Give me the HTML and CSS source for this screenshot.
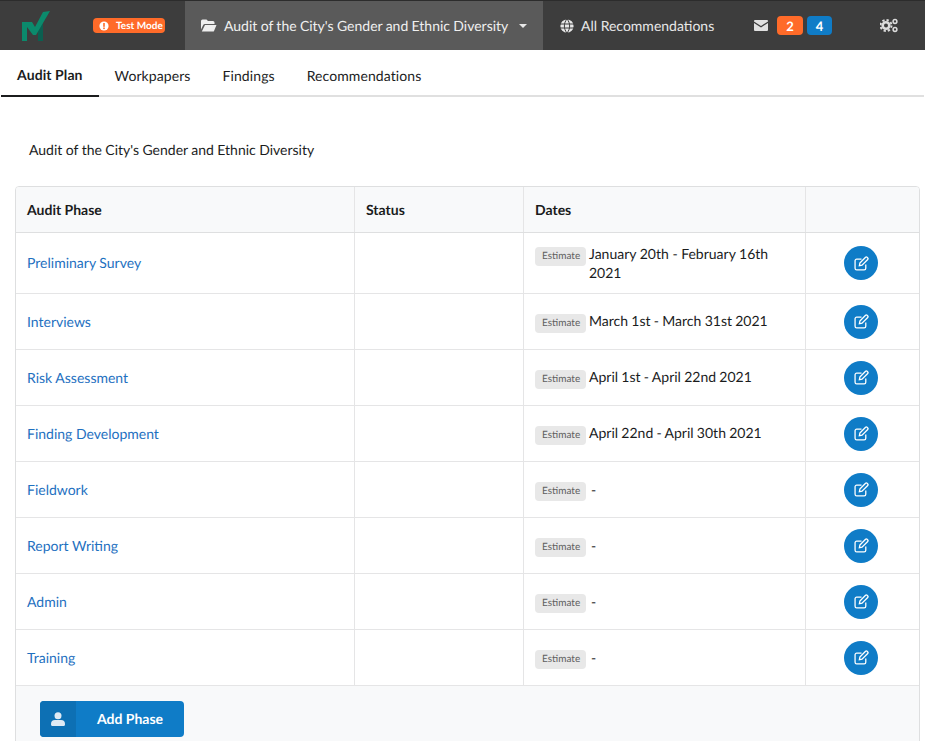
FILE: index.html
```html
<!DOCTYPE html>
<html lang="en">
<head>
<meta charset="utf-8">
<title>Audit Plan</title>
<link rel="stylesheet" href="styles.css">
</head>
<body>
<header class="topbar">
  <div class="brand">
    <svg class="logo" width="28" height="30" viewBox="0 0 28 30"><path fill="#0b5f50" d="M16 19l5-7v18h-5z"/><path fill="#0b8a6c" d="M0 11h10l3 5L21 1l7-1-14 24h-3l-6-8v14H0z"/></svg>
  </div>
  <div class="test-mode"><svg width="10" height="10" viewBox="0 0 10 10"><circle cx="5" cy="5" r="4.6" fill="#fff"/><rect x="4.2" y="2" width="1.6" height="3.8" fill="#ff6b29"/><rect x="4.2" y="6.5" width="1.6" height="1.6" fill="#ff6b29"/></svg><span>Test Mode</span></div>
  <div class="project">
    <svg width="16" height="13" viewBox="0 0 16 13"><path fill="#eee" d="M0 2a1.500 1.500 0 0 1 1.500-1.500h4L7 2h5a1.500 1.500 0 0 1 1.500 1.500V5H4a2 2 0 0 0-1.800 1.100L0 10.500z"/><path fill="#eee" d="M4 6h11.500L13 12a1 1 0 0 1-1 .6H0.800z"/></svg>
    <span class="project-name">Audit of the City's Gender and Ethnic Diversity</span>
    <span class="caret"></span>
  </div>
  <div class="all-rec">
    <svg width="14" height="14" viewBox="0 0 14 14"><circle cx="7" cy="7" r="6.600" fill="#e6e6e6"/><path stroke="#3d3d3d" fill="none" stroke-width="1" d="M0 5h14M0 9h14M7 0C3.500 4 3.500 10 7 14M7 0c3.500 4 3.500 10 0 14"/></svg>
    <span>All Recommendations</span>
  </div>
  <div class="notices">
    <svg width="14" height="11" viewBox="0 0 14 11"><path fill="#e0e0e0" d="M1 0h12a1 1 0 0 1 1 1v.6L7 6 0 1.600V1a1 1 0 0 1 1-1z"/><path fill="#e0e0e0" d="M0 3l7 4.400L14 3v7a1 1 0 0 1-1 1H1a1 1 0 0 1-1-1z"/></svg>
    <span class="count orange">2</span>
    <span class="count blue">4</span>
  </div>
  <div class="gears">
    <svg width="18" height="15" viewBox="0 0 18 15"><g fill="none" stroke="#dcdcdc"><circle cx="6" cy="7.500" r="3.300" stroke-width="2.600"/><circle cx="6" cy="7.500" r="5.500" stroke-width="2" stroke-dasharray="2.300 2"/><circle cx="15" cy="3.500" r="1.900" stroke-width="1.500"/><circle cx="15" cy="11.500" r="1.900" stroke-width="1.500"/></g></svg>
  </div>
</header>
<nav class="tabs">
  <a class="tab active">Audit Plan</a>
  <a class="tab">Workpapers</a>
  <a class="tab">Findings</a>
  <a class="tab">Recommendations</a>
</nav>
<main class="content">
  <p class="audit-title">Audit of the City's Gender and Ethnic Diversity</p>
  <div class="table-card">
    <div class="row head">
      <div class="cell">Audit Phase</div><div class="cell">Status</div><div class="cell">Dates</div><div class="cell"></div>
    </div>
    <div class="row tall">
      <div class="cell"><a class="phase">Preliminary Survey</a></div><div class="cell"></div>
      <div class="cell dates"><span class="label">Estimate</span><span>January 20th - February 16th 2021</span></div>
      <div class="cell action"><button class="edit"><svg width="15" height="15" viewBox="0 0 14 14"><use href="#pen"/></svg></button></div>
    </div>
    <div class="row">
      <div class="cell"><a class="phase">Interviews</a></div><div class="cell"></div>
      <div class="cell dates"><span class="label">Estimate</span><span class="range">March 1st - March 31st 2021</span></div>
      <div class="cell action"><button class="edit"><svg width="15" height="15" viewBox="0 0 14 14"><use href="#pen"/></svg></button></div>
    </div>
    <div class="row">
      <div class="cell"><a class="phase">Risk Assessment</a></div><div class="cell"></div>
      <div class="cell dates"><span class="label">Estimate</span><span class="range">April 1st - April 22nd 2021</span></div>
      <div class="cell action"><button class="edit"><svg width="15" height="15" viewBox="0 0 14 14"><use href="#pen"/></svg></button></div>
    </div>
    <div class="row">
      <div class="cell"><a class="phase">Finding Development</a></div><div class="cell"></div>
      <div class="cell dates"><span class="label">Estimate</span><span class="range">April 22nd - April 30th 2021</span></div>
      <div class="cell action"><button class="edit"><svg width="15" height="15" viewBox="0 0 14 14"><use href="#pen"/></svg></button></div>
    </div>
    <div class="row">
      <div class="cell"><a class="phase">Fieldwork</a></div><div class="cell"></div>
      <div class="cell dates"><span class="label">Estimate</span><span class="dash">-</span></div>
      <div class="cell action"><button class="edit"><svg width="15" height="15" viewBox="0 0 14 14"><use href="#pen"/></svg></button></div>
    </div>
    <div class="row">
      <div class="cell"><a class="phase">Report Writing</a></div><div class="cell"></div>
      <div class="cell dates"><span class="label">Estimate</span><span class="dash">-</span></div>
      <div class="cell action"><button class="edit"><svg width="15" height="15" viewBox="0 0 14 14"><use href="#pen"/></svg></button></div>
    </div>
    <div class="row">
      <div class="cell"><a class="phase">Admin</a></div><div class="cell"></div>
      <div class="cell dates"><span class="label">Estimate</span><span class="dash">-</span></div>
      <div class="cell action"><button class="edit"><svg width="15" height="15" viewBox="0 0 14 14"><use href="#pen"/></svg></button></div>
    </div>
    <div class="row">
      <div class="cell"><a class="phase">Training</a></div><div class="cell"></div>
      <div class="cell dates"><span class="label">Estimate</span><span class="dash">-</span></div>
      <div class="cell action"><button class="edit"><svg width="15" height="15" viewBox="0 0 14 14"><use href="#pen"/></svg></button></div>
    </div>
    <div class="table-foot">
      <button class="add"><span class="add-icon"><svg width="14" height="14" viewBox="0 0 14 14"><circle cx="7" cy="3.800" r="3.500" fill="#dfeaf4"/><path fill="#dfeaf4" d="M0 12a4 4 0 0 1 4-4h6a4 4 0 0 1 4 4v.5a1.500 1.500 0 0 1-1.500 1.500h-11A1.500 1.500 0 0 1 0 12.500z"/></svg></span><span class="add-text">Add Phase</span></button>
    </div>
  </div>
</main>
<svg class="defs" width="0" height="0"><defs><g id="pen" fill="none" stroke="#fff" stroke-width="1.200"><path d="M11 8v3.500a1.500 1.500 0 0 1-1.500 1.500h-7A1.500 1.500 0 0 1 1 11.500v-7A1.500 1.500 0 0 1 2.500 3H7"/><path d="M5.500 6.500L10.800 1.200a1 1 0 0 1 1.400 0l.6.6a1 1 0 0 1 0 1.400L7.500 8.500 5 9z"/></g></defs></svg>
</body>
</html>
```
FILE: styles.css
```css
* { box-sizing: border-box; }
html, body { margin: 0; padding: 0; }
body { font-family: Lato, "Open Sans", sans-serif; font-size: 14px; color: #1b1c1d; background: #fff; height: 741px; overflow: hidden; text-rendering: geometricPrecision; }
.topbar { display: flex; align-items: center; height: 50px; background: #3d3d3d; border-top: 1px solid #2c2c2c; color: #e8e8e8; }
.brand { width: 93px; display: flex; padding-left: 22px; }
.test-mode { width: 72px; height: 15px; background: #ff6b29; border-radius: 4px; color: #fff; font-size: 10px; font-weight: 700; display: flex; align-items: center; gap: 7px; padding-left: 6px; }
.project { margin-left: 20px; width: 358px; height: 49px; background: #5a5a5a; display: flex; align-items: center; padding-left: 16px; font-size: 14px; color: #f0f0f0; }
.project-name { margin-left: 7px; word-spacing: -0.28px; }
.caret { margin-left: 11px; width: 0; height: 0; border-left: 4px solid transparent; border-right: 4px solid transparent; border-top: 4px solid #e8e8e8; }
.all-rec { margin-left: 17px; width: 194px; display: flex; align-items: center; gap: 7px; }
.notices { display: flex; align-items: center; }
.count { height: 19px; border-radius: 4px; color: #fff; font-weight: 700; font-size: 13px; display: flex; align-items: center; justify-content: center; }
.orange { background: #ff6b29; width: 26px; margin-left: 9px; }
.blue { background: #0f7cc7; width: 25px; margin-left: 4px; }
.gears { margin-left: 48px; display: flex; }
.tabs { display: flex; height: 47px; margin: 0 1px; border-bottom: 2px solid #e0e0e0; }
.tab { padding: 4px 16px 0; display: flex; align-items: center; height: 47px; font-size: 14px; color: #1b1c1d; letter-spacing: 0.09px; }
.active { font-weight: 700; border-bottom: 2px solid #1b1c1d; }
.content { padding: 0 5px 0 15px; }
.audit-title { margin: 44px 0 27px 14px; line-height: 18px; height: 18px; word-spacing: -0.15px; }
.table-card { border: 1px solid #dedfe0; border-radius: 4px; overflow: hidden; }
.row { display: grid; grid-template-columns: 338px 169px 282px 1fr; height: 56px; border-bottom: 1px solid #e5e5e6; }
.row.tall { height: 61px; }
.head { height: 46px; background: #f8f9fa; font-weight: 700; border-bottom-color: #dedfe0; }
.cell { padding: 0 11px; display: flex; align-items: center; border-left: 1px solid #e5e5e6; }
.cell:first-child { border-left: 0; }
.phase { color: #1e70bf; }
.row.tall .phase { margin-top: -2px; }
.dates { gap: 3px; align-items: center; }
.row.tall .dates { align-items: flex-start; padding-top: 11px; line-height: 19px; }
.row.tall .label { margin-top: 3px; }
.range { margin-top: -2px; word-spacing: -0.3px; }
.label { flex: none; background: #e8e8e8; color: #5f5f5f; border-radius: 4px; font-size: 10px; font-weight: 400; padding: 0 7px; height: 19px; line-height: 19px; margin-top: 4px; width: 51px; }
.dash { margin-left: 2px; margin-top: -1px; }
.action { justify-content: center; padding-right: 14px; }
.edit { width: 34px; height: 34px; padding: 0; border: 0; border-radius: 50%; background: #0f7cc7; display: flex; align-items: center; justify-content: center; }
.table-foot { height: 60px; background: #f8f9fa; padding: 15px 0 0 24px; }
.add { display: flex; width: 144px; height: 36px; padding: 0; border: 0; border-radius: 4px; overflow: hidden; background: #0f7cc7; color: #fff; font-family: inherit; font-size: 14px; font-weight: 700; text-rendering: geometricPrecision; }
.add-icon { width: 36px; height: 36px; background: #0d70b4; display: flex; align-items: center; justify-content: center; }
.add-text { flex: 1; line-height: 36px; text-align: center; }
.defs { position: absolute; }
```
